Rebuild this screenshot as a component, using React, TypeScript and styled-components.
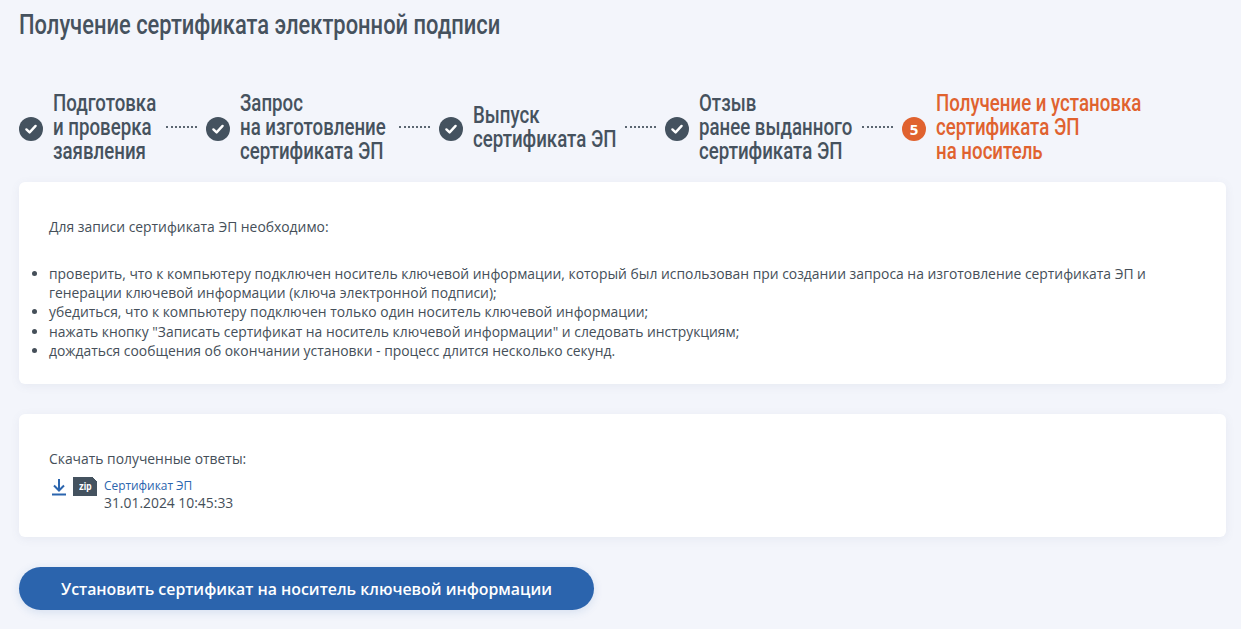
import styled, { createGlobalStyle } from "styled-components";

const GlobalStyle = createGlobalStyle`
  html, body {
    margin: 0;
    padding: 0;
    background-color: #f3f5fb;
  }
`;

const Page = styled.div`
  width: 1241px;
  height: 629px;
  overflow: hidden;
  box-sizing: border-box;
  padding: 9px 15px 0 19px;
  font-family: "Open Sans", sans-serif;
  color: #454f59;
`;

const Title = styled.h1`
  width: max-content;
  margin: 0 0 52px;
  font-family: "Roboto", sans-serif;
  font-size: 27px;
  line-height: 32px;
  font-weight: 500;
  color: #46525e;
  transform: scaleX(0.812);
  transform-origin: left center;
`;

const Steps = styled.div`
  display: flex;
  align-items: center;
  height: 72px;
  margin-bottom: 17px;
`;

const Step = styled.div`
  display: flex;
  align-items: center;
  gap: 10px;
`;

const StepBadge = styled.span<{ $active?: boolean }>`
  flex: none;
  width: 24px;
  height: 24px;
  border-radius: 50%;
  display: flex;
  align-items: center;
  justify-content: center;
  background-color: ${(p) => (p.$active ? "#e0622f" : "#44525f")};
  color: #fff;
  font-size: 15px;
  font-weight: 700;
`;

const StepText = styled.div<{ $active?: boolean; $width: number }>`
  width: ${(p) => p.$width}px;
  margin-bottom: 2px;
  font-family: "Roboto", sans-serif;
  font-size: 23px;
  font-weight: 500;
  line-height: 24px;
  white-space: nowrap;
  color: ${(p) => (p.$active ? "#e0622f" : "#46525e")};
`;

const StepLine = styled.div`
  width: max-content;
  transform: scaleX(0.812);
  transform-origin: left center;
`;

const Dots = styled.span`
  flex: none;
  width: 31px;
  margin: 0 9px 4px 0;
  border-top: 2px dotted #5b6671;
`;

const Panel = styled.section<{ $height: number }>`
  box-sizing: border-box;
  height: ${(p) => p.$height}px;
  margin-bottom: 30px;
  padding: 35px 30px 0;
  background-color: #fff;
  border-radius: 6px;
  box-shadow: 0 2px 10px rgba(90, 105, 140, 0.08);
  font-size: 13.88px;
  line-height: 19.25px;
`;

const Lead = styled.p`
  margin: 0 0 27.6px;
`;

const List = styled.ul`
  margin: 0;
  padding: 0;
  list-style: disc;
`;

const DownloadTitle = styled.p`
  margin: 0 0 9px;
`;

const FileRow = styled.div`
  display: flex;
  align-items: flex-start;
`;

const DownloadIcon = styled.svg`
  flex: none;
  width: 20px;
  height: 20px;
  margin: 0 4px 0 0;
`;

const FileBadge = styled.span`
  flex: none;
  width: 24px;
  height: 19px;
  margin-right: 7px;
  display: flex;
  align-items: center;
  justify-content: center;
  background: linear-gradient(225deg, transparent 3px, #44525f 3px);
`;

const FileBadgeText = styled.span`
  color: #fff;
  font-family: "Roboto", sans-serif;
  font-size: 11px;
  font-weight: 700;
  transform: scaleX(0.85);
`;

const FileInfo = styled.div`
  display: flex;
  flex-direction: column;
`;

const FileLink = styled.a`
  font-size: 11.9px;
  line-height: 16px;
  color: #2b65ae;
  text-decoration: none;
`;

const FileDate = styled.span`
  line-height: 20px;
`;

const InstallButton = styled.button`
  display: block;
  width: 575px;
  height: 43px;
  padding: 0;
  border: none;
  border-radius: 22px;
  background-color: #2b64ad;
  box-shadow: 0 2px 10px rgba(43, 100, 173, 0.15);
  color: #fff;
  font-family: "Open Sans", sans-serif;
  font-size: 15.87px;
  font-weight: 600;
`;

const CheckIcon = () => (
  <svg width="14" height="14" viewBox="0 0 14 14" fill="none">
    <path d="M2.4 7.4 5.6 10.4 11.6 3.9" stroke="#fff" strokeWidth="2.4" strokeLinecap="round" strokeLinejoin="round" />
  </svg>
);

const steps = [
  { lines: ["Подготовка", "и проверка", "заявления"], width: 103 },
  { lines: ["Запрос", "на изготовление", "сертификата ЭП"], width: 149 },
  { lines: ["Выпуск", "сертификата ЭП"], width: 142 },
  { lines: ["Отзыв", "ранее выданного", "сертификата ЭП"], width: 153 },
];

const items = [
  "проверить, что к компьютеру подключен носитель ключевой информации, который был использован при создании запроса на изготовление сертификата ЭП и генерации ключевой информации (ключа электронной подписи);",
  "убедиться, что к компьютеру подключен только один носитель ключевой информации;",
  'нажать кнопку "Записать сертификат на носитель ключевой информации" и следовать инструкциям;',
  "дождаться сообщения об окончании установки - процесс длится несколько секунд.",
];

export default function App() {
  return (
    <Page>
      <GlobalStyle />
      <Title>Получение сертификата электронной подписи</Title>
      <Steps>
        {steps.map((step) => (
          <Step key={step.lines[0]}>
            <StepBadge>
              <CheckIcon />
            </StepBadge>
            <StepText $width={step.width}>
              {step.lines.map((line) => (
                <StepLine key={line}>{line}</StepLine>
              ))}
            </StepText>
            <Dots />
          </Step>
        ))}
        <Step>
          <StepBadge $active>5</StepBadge>
          <StepText $active $width={205}>
            <StepLine>Получение и установка</StepLine>
            <StepLine>сертификата ЭП</StepLine>
            <StepLine>на носитель</StepLine>
          </StepText>
        </Step>
      </Steps>
      <Panel $height={202}>
        <Lead>Для записи сертификата ЭП необходимо:</Lead>
        <List>
          {items.map((item) => (
            <li key={item}>{item}</li>
          ))}
        </List>
      </Panel>
      <Panel $height={123}>
        <DownloadTitle>Скачать полученные ответы:</DownloadTitle>
        <FileRow>
          <DownloadIcon viewBox="0 0 20 20" fill="none" stroke="#2b65ae" strokeWidth="2">
            <path d="M10 2v11M5 8.5l5 5 5-5M3 17.5h14" />
          </DownloadIcon>
          <FileBadge>
            <FileBadgeText>zip</FileBadgeText>
          </FileBadge>
          <FileInfo>
            <FileLink>Сертификат ЭП</FileLink>
            <FileDate>31.01.2024 10:45:33</FileDate>
          </FileInfo>
        </FileRow>
      </Panel>
      <InstallButton>Установить сертификат на носитель ключевой информации</InstallButton>
    </Page>
  );
}
